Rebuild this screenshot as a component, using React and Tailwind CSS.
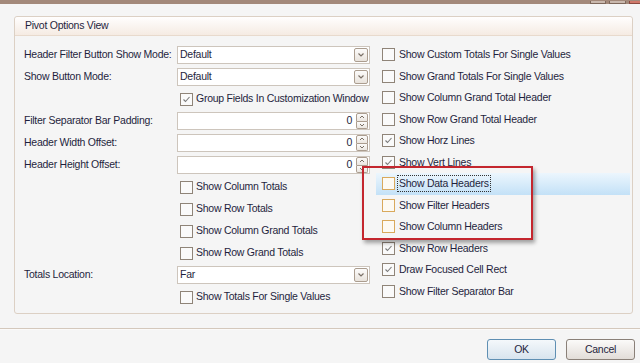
import React from 'react';

const leftRows = [
  { type: 'combo', label: 'Header Filter Button Show Mode:', value: 'Default' },
  { type: 'combo', label: 'Show Button Mode:', value: 'Default' },
  { type: 'check', label: 'Group Fields In Customization Window', checked: true },
  { type: 'spin', label: 'Filter Separator Bar Padding:', value: '0' },
  { type: 'spin', label: 'Header Width Offset:', value: '0' },
  { type: 'spin', label: 'Header Height Offset:', value: '0' },
  { type: 'check', label: 'Show Column Totals' },
  { type: 'check', label: 'Show Row Totals' },
  { type: 'check', label: 'Show Column Grand Totals' },
  { type: 'check', label: 'Show Row Grand Totals' },
  { type: 'combo', label: 'Totals Location:', value: 'Far' },
  { type: 'check', label: 'Show Totals For Single Values' },
];

const rightRows = [
  { label: 'Show Custom Totals For Single Values' },
  { label: 'Show Grand Totals For Single Values' },
  { label: 'Show Column Grand Total Header' },
  { label: 'Show Row Grand Total Header' },
  { label: 'Show Horz Lines', checked: true },
  { label: 'Show Vert Lines', checked: true },
  { label: 'Show Data Headers', hot: true, selected: true },
  { label: 'Show Filter Headers', hot: true },
  { label: 'Show Column Headers', hot: true },
  { label: 'Show Row Headers', checked: true },
  { label: 'Draw Focused Cell Rect', checked: true },
  { label: 'Show Filter Separator Bar' },
];

function CheckBox({ checked, hot }) {
  return (
    <div
      className={`w-[13px] h-[13px] shrink-0 border flex items-center justify-center ${
        hot ? 'border-[#d9a95c] bg-[#fdfaf3]' : 'border-[#8f8478] bg-[#fafafa]'
      }`}
    >
      {checked && (
        <svg width="9" height="9" viewBox="0 0 9 9">
          <polyline points="1.5,4.5 3.5,6.5 7.5,2" fill="none" stroke="#7b7b7b" strokeWidth="1.1" />
        </svg>
      )}
    </div>
  );
}

function Combo({ value }) {
  return (
    <div className="w-[193px] h-[18px] shrink-0 border border-[#cdc5bc] bg-white flex items-center pl-[2px] pr-[1px]">
      <span className="flex-1">{value}</span>
      <div className="w-[14px] h-[14px] rounded-[2px] border border-[#ab9d8f] bg-gradient-to-b from-[#fcfbfa] to-[#e9e3dc] flex items-center justify-center">
        <svg width="8" height="6" viewBox="0 0 8 6">
          <polyline points="1.5,1.5 4,4 6.5,1.5" fill="none" stroke="#7a7066" strokeWidth="1.2" />
        </svg>
      </div>
    </div>
  );
}

function Spin({ value }) {
  return (
    <div className="w-[193px] h-[18px] shrink-0 border border-[#cdc5bc] bg-white flex items-center pr-[1px]">
      <span className="flex-1 text-right pr-[4px]">{value}</span>
      <div className="w-[12px] h-[16px] flex flex-col">
        <div className="flex-1 rounded-t-[2px] border border-[#ab9d8f] bg-gradient-to-b from-[#fcfbfa] to-[#ebe6e0] flex items-center justify-center">
          <svg width="6" height="4" viewBox="0 0 6 4">
            <polyline points="1,3 3,1 5,3" fill="none" stroke="#7a7066" strokeWidth="1" />
          </svg>
        </div>
        <div className="flex-1 rounded-b-[2px] border border-t-0 border-[#ab9d8f] bg-gradient-to-b from-[#fcfbfa] to-[#ebe6e0] flex items-center justify-center">
          <svg width="6" height="4" viewBox="0 0 6 4">
            <polyline points="1,1 3,3 5,1" fill="none" stroke="#7a7066" strokeWidth="1" />
          </svg>
        </div>
      </div>
    </div>
  );
}

export default function App() {
  return (
    <div
      className="w-[640px] h-[363px] bg-[#f5f5f5] flex flex-col relative overflow-hidden text-[10.5px] tracking-[-0.25px] text-[#1f1f3d]"
      style={{ fontFamily: '"Liberation Sans", Arial, sans-serif' }}
    >
      {/* borde de la ventana */}
      <div className="h-[4px] shrink-0 bg-[#a3897a] flex justify-end items-end gap-[3px]">
        <div className="w-[16px] h-[3px] border border-t-0 border-[#7e685b] bg-[#c9b8ad]" />
        <div className="w-[17px] h-[3px] border border-t-0 border-[#7e685b] bg-[#c9b8ad]" />
        <div className="w-[11px] h-[3px] border border-t-0 border-r-0 border-[#8a4a40] bg-[#d0786a]" />
      </div>

      <div className="pl-[14px] pr-[7px] pt-[12px]">
        <div className="h-[298px] border border-[#dcd0c4] rounded-[3px] flex flex-col">
          <div className="h-[19px] shrink-0 bg-gradient-to-b from-[#fffefe] to-[#f5ebe3] border-b border-[#e8dacd] pl-[10px] flex items-center rounded-t-[3px]">
            Pivot Options View
          </div>

          <div className="flex pt-[8px]">
            {/* columna izquierda */}
            <div className="w-[355px] shrink-0 flex flex-col pl-[9px]">
              {leftRows.map((r, i) => (
                <div key={i} className="h-[22px] flex items-center whitespace-nowrap">
                  {r.type === 'check' ? (
                    <>
                      <div className="w-[156px] shrink-0" />
                      <CheckBox checked={r.checked} />
                      <span className="ml-[3px]">{r.label}</span>
                    </>
                  ) : (
                    <>
                      <div className="w-[153px] shrink-0">{r.label}</div>
                      {r.type === 'combo' ? <Combo value={r.value} /> : <Spin value={r.value} />}
                    </>
                  )}
                </div>
              ))}
            </div>

            {/* columna derecha */}
            <div className="flex flex-col flex-1 ml-[6px] mr-[2px]">
              {rightRows.map((r, i) => (
                <div
                  key={i}
                  className={`h-[21.5px] flex items-center pl-[6px] whitespace-nowrap ${
                    r.selected ? 'bg-gradient-to-b from-[#ecf6fd] to-[#c3e1f7]' : ''
                  }`}
                >
                  <CheckBox checked={r.checked} hot={r.hot} />
                  <span
                    className={`ml-[2px] px-[1px] leading-[15px] ${
                      r.selected ? 'border border-dotted border-[#333]' : 'border border-transparent'
                    }`}
                  >
                    {r.label}
                  </span>
                </div>
              ))}
            </div>
          </div>
        </div>
      </div>

      {/* separador */}
      <div className="mt-[14px] h-[2px] shrink-0 border-t border-[#d4c8bc] border-b border-b-[#fbfaf9]" />

      {/* botones */}
      <div className="flex justify-end gap-[10px] pr-[5px] mt-[9px]">
        <button className="w-[69px] h-[21px] rounded-[3px] border border-[#5f8fb3] bg-gradient-to-b from-[#f4f8fb] to-[#d8e4ee] text-[#1f1f3d]">
          OK
        </button>
        <button className="w-[69px] h-[21px] rounded-[3px] border border-[#8a8078] bg-gradient-to-b from-[#fbfaf9] to-[#e2ddd8] text-[#1f1f3d]">
          Cancel
        </button>
      </div>

      {/* recuadro rojo de anotación */}
      <div className="absolute left-[362px] top-[166px] w-[171px] h-[74px] border-2 border-[#c4262e] shadow-[2px_3px_4px_rgba(0,0,0,0.35)] pointer-events-none" />
    </div>
  );
}
